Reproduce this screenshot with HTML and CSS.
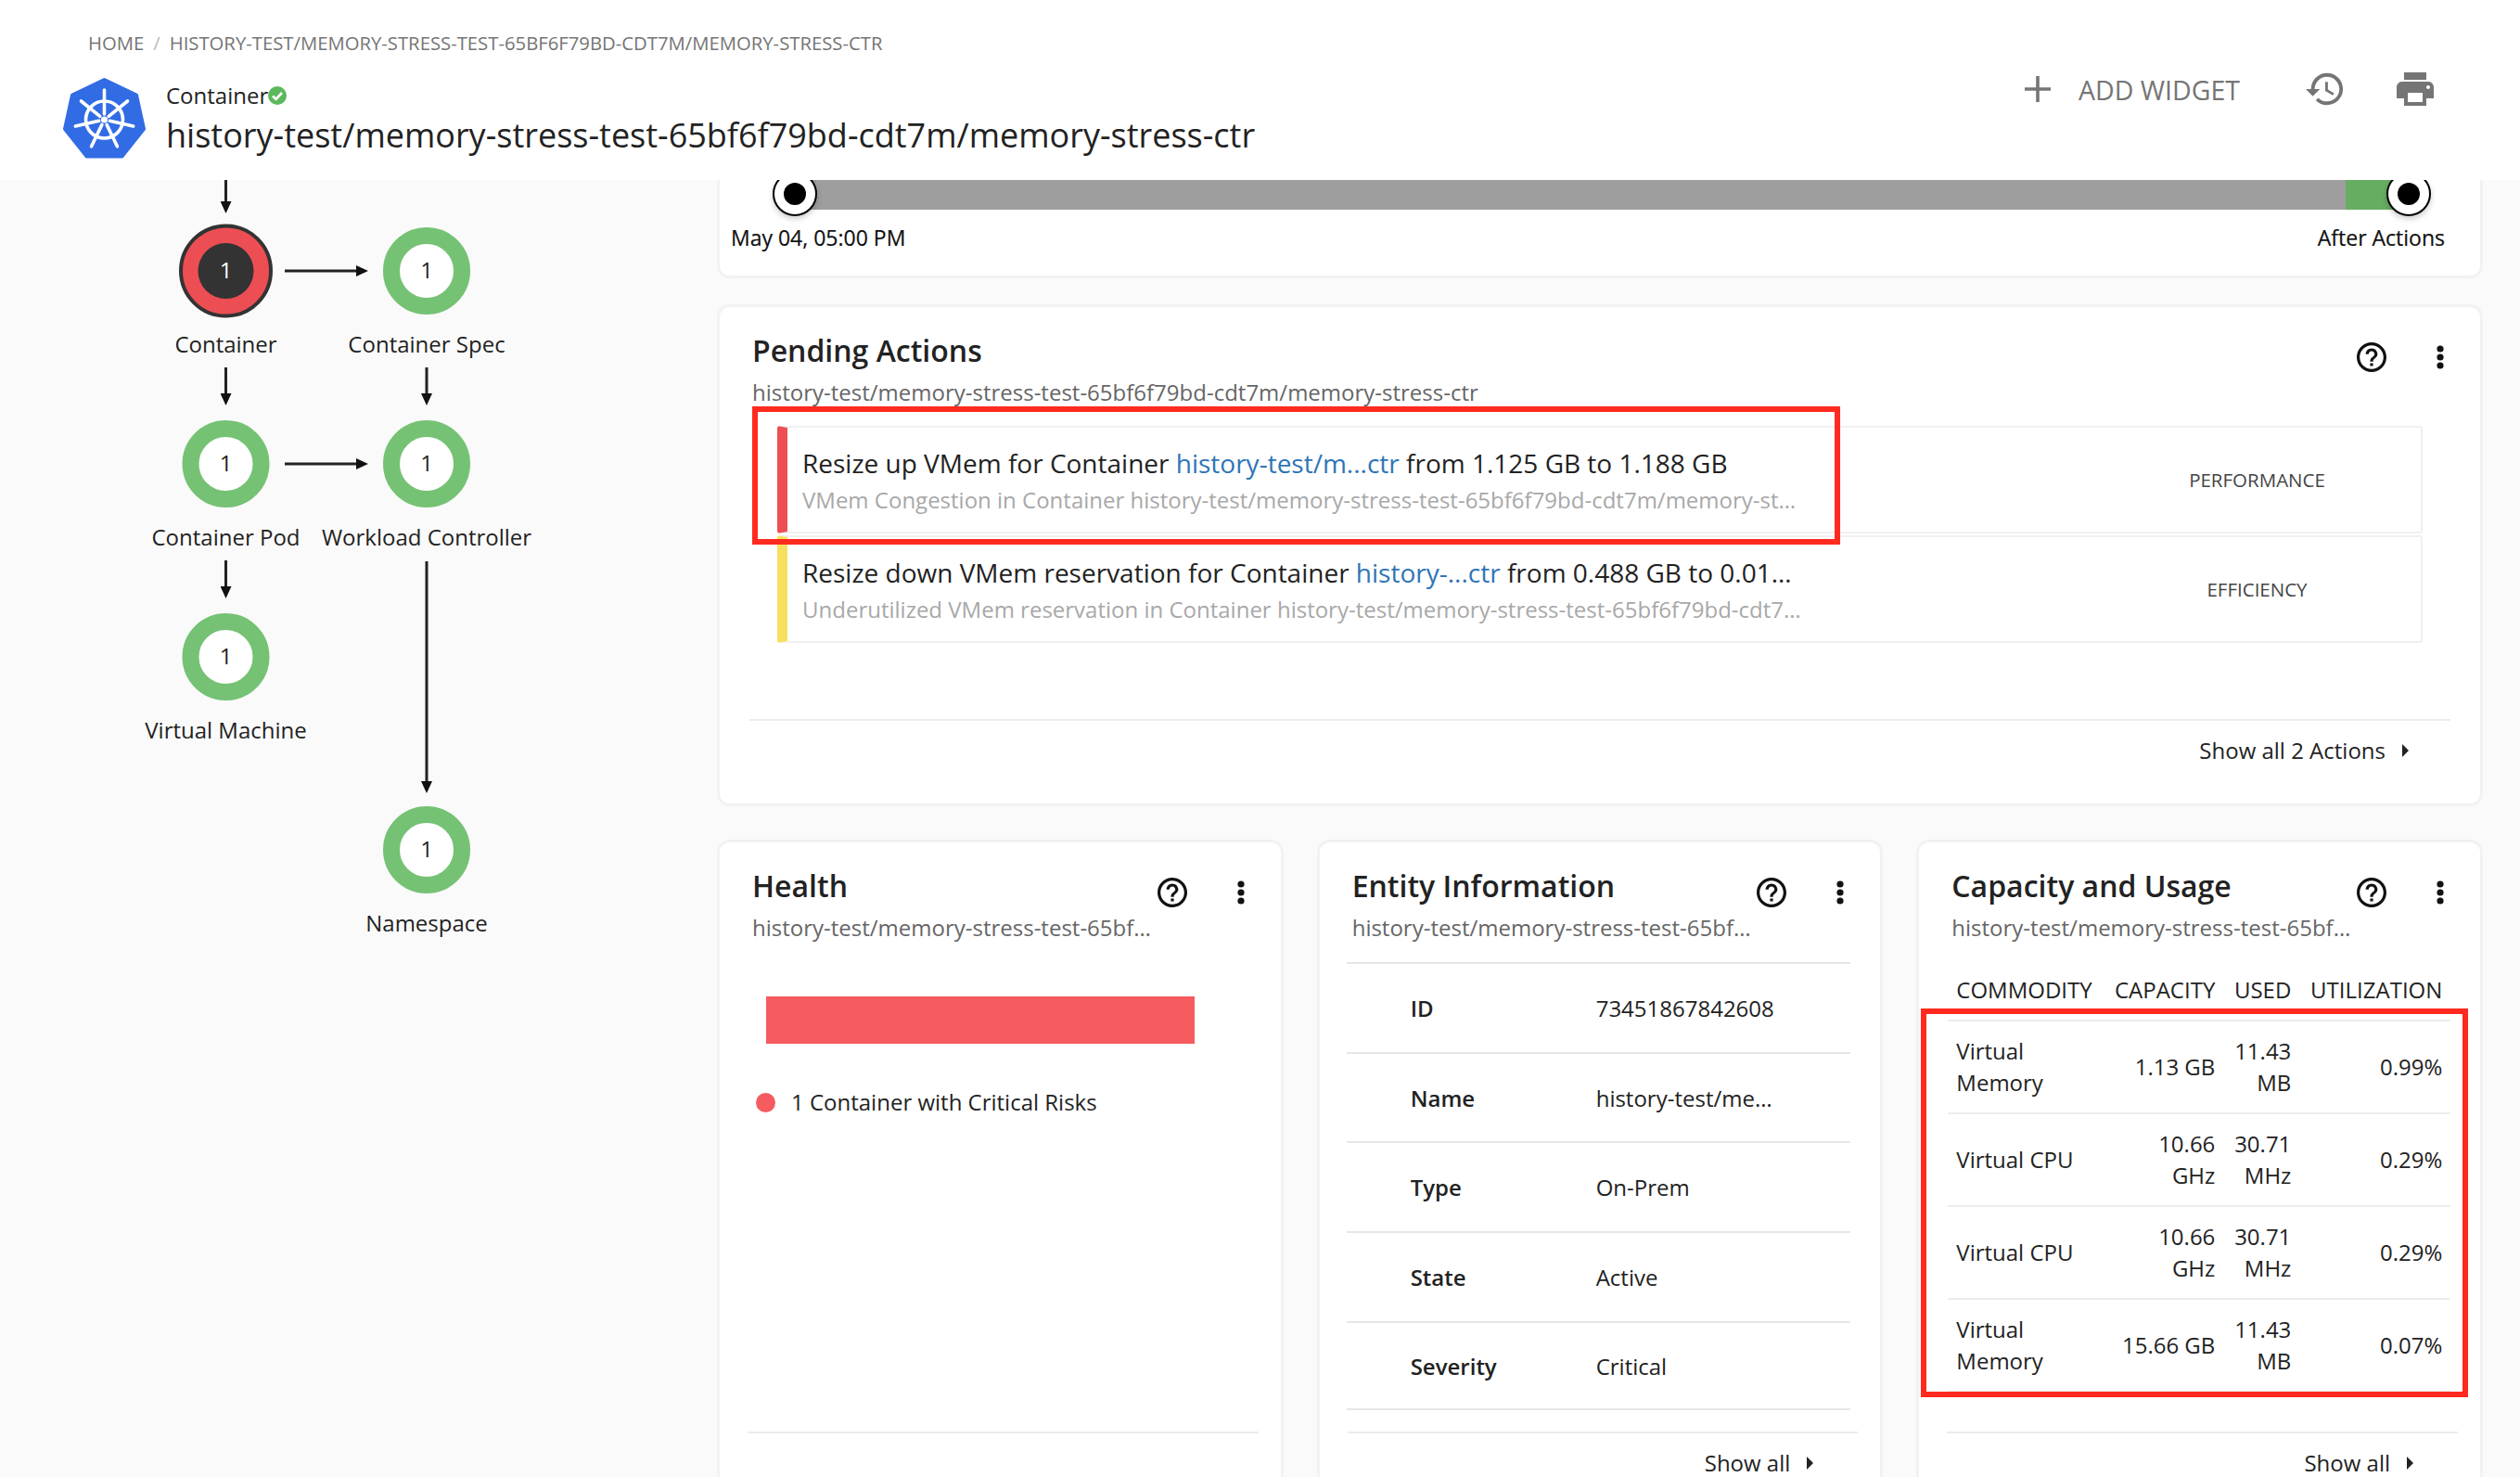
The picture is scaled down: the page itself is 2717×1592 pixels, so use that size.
FILE: index.html
```html
<!DOCTYPE html>
<html lang="en">

<head>
    <meta charset="UTF-8">
    <meta name="viewport" content="width=device-width, initial-scale=1.0">
    <title>Container - history-test/memory-stress-ctr</title>
    <link rel="stylesheet" href="styles.css">
</head>

<body>
    <svg class="icon-defs" width="0" height="0">
        <symbol id="icon-help" viewBox="2 2 20 20">
            <path d="M11 18h2v-2h-2v2zm1-16C6.48 2 2 6.48 2 12s4.48 10 10 10 10-4.48 10-10S17.52 2 12 2zm0 18c-4.41 0-8-3.59-8-8s3.59-8 8-8 8 3.59 8 8-3.59 8-8 8zm0-14c-2.21 0-4 1.79-4 4h2c0-1.1.9-2 2-2s2 .9 2 2c0 2-3 1.75-3 5h2c0-2.25 3-2.5 3-5 0-2.21-1.79-4-4-4z" />
        </symbol>
        <symbol id="icon-more" viewBox="0 0 8 26">
            <circle cx="4" cy="4" r="3.6" />
            <circle cx="4" cy="13" r="3.6" />
            <circle cx="4" cy="22" r="3.6" />
        </symbol>
    </svg>

    <header class="topbar">
        <div class="topbar-left">
            <nav class="breadcrumb">
                <span>Home</span>
                <span class="breadcrumb-sep">/</span>
                <span>history-test/memory-stress-test-65bf6f79bd-cdt7m/memory-stress-ctr</span>
            </nav>
            <div class="entity-title">
                <svg class="k8s-logo" viewBox="0 0 89 89">
                    <polygon points="44.5,3 79,19.5 87,56 63.5,85.5 25.5,85.5 2,56 10,19.5" fill="#326ce5" stroke="#326ce5" stroke-width="4" stroke-linejoin="round" />
                    <g fill="none" stroke="#fff" stroke-width="3.6">
                        <circle cx="44.5" cy="46" r="20" />
                        <path d="M44.500 14V40M69.500 26L49.200 42.300M75.700 53.100L50.400 47.300M58.400 74.800L47.100 51.400M30.600 74.800L41.900 51.400M13.300 53.100L38.600 47.300M19.500 26L39.800 42.300" stroke-linecap="round" />
                    </g>
                    <circle cx="44.5" cy="46" r="3.6" fill="#fff" />
                </svg>
                <div>
                    <div class="entity-type">Container<svg class="check-icon" viewBox="0 0 20 20">
                            <circle cx="10" cy="10" r="10" fill="#5cb85c" />
                            <path d="M5 10.500l3.500 3.500 6.500-7" fill="none" stroke="#fff" stroke-width="2.600" />
                        </svg></div>
                    <div class="entity-name">history-test/memory-stress-test-65bf6f79bd-cdt7m/memory-stress-ctr</div>
                </div>
            </div>
        </div>
        <div class="topbar-actions">
            <svg class="plus-icon" viewBox="0 0 28 28">
                <path d="M14 0V28M0 14H28" stroke="#757575" stroke-width="3.600" />
            </svg>
            <span class="add-widget">Add Widget</span>
            <svg class="history-icon" viewBox="1 3 22 18">
                <path d="M13 3c-4.970 0-9 4.030-9 9H1l3.890 3.890.07.14L9 12H6c0-3.870 3.130-7 7-7s7 3.130 7 7-3.130 7-7 7c-1.930 0-3.680-.79-4.940-2.060l-1.420 1.420C8.270 19.990 10.510 21 13 21c4.970 0 9-4.030 9-9s-4.030-9-9-9zm-1 5v5l4.280 2.540.72-1.210-3.500-2.080V8H12z" />
            </svg>
            <svg class="print-icon" viewBox="2 3 20 18">
                <path d="M19 8H5c-1.660 0-3 1.340-3 3v6h4v4h12v-4h4v-6c0-1.660-1.340-3-3-3zm-3 11H8v-5h8v5zm3-7c-.55 0-1-.45-1-1s.45-1 1-1 1 .45 1 1-.45 1-1 1zm-1-9H6v4h12V3z" />
            </svg>
        </div>
    </header>

    <main class="page">
        <!-- supply chain, node positions are the content here -->
        <svg class="chain" viewBox="0 0 773 1398">
            <defs>
                <marker id="arrow-head" markerWidth="14" markerHeight="12" refX="0" refY="6" orient="auto" markerUnits="userSpaceOnUse">
                    <path d="M0 0L13 6L0 12z" fill="#111" />
                </marker>
            </defs>
            <g class="chain-edges" transform="translate(0,-194)">
                <path d="M243.500 194V217" marker-end="url(#arrow-head)" />
                <path d="M243.500 396V424" marker-end="url(#arrow-head)" />
                <path d="M460 396V424" marker-end="url(#arrow-head)" />
                <path d="M243.500 604V632" marker-end="url(#arrow-head)" />
                <path d="M460 605V842" marker-end="url(#arrow-head)" />
                <path d="M307 292H384" marker-end="url(#arrow-head)" />
                <path d="M307 500H384" marker-end="url(#arrow-head)" />
            </g>
            <g transform="translate(0,-194)">
                <circle cx="243.500" cy="292" r="48.500" fill="#ed4e53" stroke="#333" stroke-width="4" />
                <circle cx="243.500" cy="292" r="30" fill="#333" />
                <text class="node-count node-count-dark" x="243.500" y="290">1</text>
                <text class="node-label" x="243.500" y="370">Container</text>

                <circle class="node-ok" cx="460" cy="292" r="38" />
                <text class="node-count" x="460" y="290">1</text>
                <text class="node-label" x="460" y="370">Container Spec</text>

                <circle class="node-ok" cx="243.500" cy="500" r="38" />
                <text class="node-count" x="243.500" y="498">1</text>
                <text class="node-label" x="243.500" y="578">Container Pod</text>

                <circle class="node-ok" cx="460" cy="500" r="38" />
                <text class="node-count" x="460" y="498">1</text>
                <text class="node-label" x="460" y="578">Workload Controller</text>

                <circle class="node-ok" cx="243.500" cy="708" r="38" />
                <text class="node-count" x="243.500" y="706">1</text>
                <text class="node-label" x="243.500" y="786">Virtual Machine</text>

                <circle class="node-ok" cx="460" cy="916" r="38" />
                <text class="node-count" x="460" y="914">1</text>
                <text class="node-label" x="460" y="994">Namespace</text>
            </g>
        </svg>

        <div class="content">
            <section class="card slider-card">
                <div class="slider-track">
                    <div class="slider-fill"></div>
                    <span class="slider-knob slider-knob-left"></span>
                    <span class="slider-knob slider-knob-right"></span>
                </div>
                <div class="slider-labels">
                    <span>May 04, 05:00 PM</span>
                    <span>After Actions</span>
                </div>
            </section>

            <section class="card">
                <div class="card-head">
                    <div>
                        <h2>Pending Actions</h2>
                        <div class="card-sub">history-test/memory-stress-test-65bf6f79bd-cdt7m/memory-stress-ctr</div>
                    </div>
                    <div class="card-tools">
                        <svg class="help-icon"><use href="#icon-help" /></svg>
                        <svg class="more-icon"><use href="#icon-more" /></svg>
                    </div>
                </div>
                <div class="action-list">
                    <div class="action-row action-critical">
                        <div class="action-text">
                            <div class="action-title">Resize up VMem for Container <a>history-test/m...ctr</a> from 1.125 GB to 1.188 GB</div>
                            <div class="action-reason">VMem Congestion in Container history-test/memory-stress-test-65bf6f79bd-cdt7m/memory-stress-ctr</div>
                        </div>
                        <div class="action-tag">PERFORMANCE</div>
                    </div>
                    <div class="action-row action-minor">
                        <div class="action-text">
                            <div class="action-title">Resize down VMem reservation for Container <a>history-...ctr</a> from 0.488 GB to 0.01 GB</div>
                            <div class="action-reason">Underutilized VMem reservation in Container history-test/memory-stress-test-65bf6f79bd-cdt7m/memory-stress-ctr</div>
                        </div>
                        <div class="action-tag">EFFICIENCY</div>
                    </div>
                </div>
                <div class="card-foot foot-actions">Show all 2 Actions<span class="foot-arrow"></span></div>
                <div class="highlight highlight-action"></div>
            </section>

            <div class="card-row">
                <section class="card">
                    <div class="card-head">
                        <div>
                            <h2>Health</h2>
                            <div class="card-sub card-sub-short">history-test/memory-stress-test-65bf6f79bd-cdt7m/memory-stress-ctr</div>
                        </div>
                        <div class="card-tools">
                            <svg class="help-icon"><use href="#icon-help" /></svg>
                            <svg class="more-icon"><use href="#icon-more" /></svg>
                        </div>
                    </div>
                    <div class="card-body health-body">
                        <div class="health-bar"></div>
                        <div class="health-legend"><span class="legend-dot"></span>1 Container with Critical Risks</div>
                    </div>
                    <div class="card-foot card-foot-small"></div>
                </section>

                <section class="card">
                    <div class="card-head">
                        <div>
                            <h2>Entity Information</h2>
                            <div class="card-sub card-sub-short">history-test/memory-stress-test-65bf6f79bd-cdt7m/memory-stress-ctr</div>
                        </div>
                        <div class="card-tools">
                            <svg class="help-icon"><use href="#icon-help" /></svg>
                            <svg class="more-icon"><use href="#icon-more" /></svg>
                        </div>
                    </div>
                    <div class="card-body entity-body">
                        <div class="entity-row"><span class="entity-key">ID</span><span class="entity-value">73451867842608</span></div>
                        <div class="entity-row"><span class="entity-key">Name</span><span class="entity-value">history-test/memory-stress-ctr</span></div>
                        <div class="entity-row"><span class="entity-key">Type</span><span class="entity-value">On-Prem</span></div>
                        <div class="entity-row"><span class="entity-key">State</span><span class="entity-value">Active</span></div>
                        <div class="entity-row"><span class="entity-key">Severity</span><span class="entity-value">Critical</span></div>
                    </div>
                    <div class="card-foot card-foot-small">Show all<span class="foot-arrow"></span></div>
                </section>

                <section class="card">
                    <div class="card-head">
                        <div>
                            <h2>Capacity and Usage</h2>
                            <div class="card-sub card-sub-short">history-test/memory-stress-test-65bf6f79bd-cdt7m/memory-stress-ctr</div>
                        </div>
                        <div class="card-tools">
                            <svg class="help-icon"><use href="#icon-help" /></svg>
                            <svg class="more-icon"><use href="#icon-more" /></svg>
                        </div>
                    </div>
                    <div class="card-body capacity-body">
                        <table class="capacity-table">
                            <colgroup>
                                <col class="col-commodity">
                                <col class="col-capacity">
                                <col class="col-used">
                                <col>
                            </colgroup>
                            <thead>
                                <tr>
                                    <th class="text-left">COMMODITY</th>
                                    <th>CAPACITY</th>
                                    <th>USED</th>
                                    <th>UTILIZATION</th>
                                </tr>
                            </thead>
                            <tbody>
                                <tr>
                                    <td class="text-left">Virtual Memory</td>
                                    <td>1.13 GB</td>
                                    <td>11.43 MB</td>
                                    <td>0.99%</td>
                                </tr>
                                <tr>
                                    <td class="text-left">Virtual CPU</td>
                                    <td>10.66 GHz</td>
                                    <td>30.71 MHz</td>
                                    <td>0.29%</td>
                                </tr>
                                <tr>
                                    <td class="text-left">Virtual CPU</td>
                                    <td>10.66 GHz</td>
                                    <td>30.71 MHz</td>
                                    <td>0.29%</td>
                                </tr>
                                <tr>
                                    <td class="text-left">Virtual Memory</td>
                                    <td>15.66 GB</td>
                                    <td>11.43 MB</td>
                                    <td>0.07%</td>
                                </tr>
                            </tbody>
                        </table>
                    </div>
                    <div class="card-foot card-foot-small">Show all<span class="foot-arrow"></span></div>
                    <div class="highlight highlight-capacity"></div>
                </section>
            </div>
        </div>
    </main>
</body>

</html>
```

FILE: styles.css
```css
* {
    box-sizing: border-box;
}

html,
body {
    margin: 0;
    height: 100%;
    overflow: hidden;
}

body {
    font-family: "Open Sans", "Noto Sans", sans-serif;
    background-color: #fafafa;
    color: #222;
    font-size: 24px;
}

.icon-defs {
    position: absolute;
}

/* top bar */
.topbar {
    height: 194px;
    background-color: #fff;
    display: flex;
    justify-content: space-between;
    padding: 0 93px 0 68px;
}

.breadcrumb {
    margin: 34px 0 0 27px;
    height: 24px;
    line-height: 24px;
    font-size: 20.300px;
    color: #757575;
    text-transform: uppercase;
    display: flex;
    gap: 10px;
}

.breadcrumb-sep {
    color: #bbb;
}

.entity-title {
    display: flex;
    gap: 22px;
    margin-top: 25px;
}

.k8s-logo {
    width: 89px;
    height: 89px;
}

.entity-type {
    font-size: 24px;
    line-height: 32px;
    margin-top: 4px;
    display: flex;
    align-items: center;
}

.check-icon {
    width: 20px;
    height: 20px;
}

.entity-name {
    font-size: 36px;
    line-height: 50px;
    margin-top: 2px;
    white-space: nowrap;
}

.topbar-actions {
    display: flex;
    align-items: flex-start;
    padding-top: 78px;
    color: #757575;
}

.plus-icon {
    width: 28px;
    height: 28px;
    margin-top: 4px;
}

.add-widget {
    margin: 0 71px 0 30px;
    font-size: 28.500px;
    line-height: 38px;
    text-transform: uppercase;
}

.history-icon {
    width: 42px;
    height: 36px;
    fill: #757575;
}

.print-icon {
    width: 40px;
    height: 36px;
    margin-left: 56px;
    fill: #757575;
}

/* page */
.page {
    height: 1398px;
    overflow: hidden;
    display: flex;
}

.chain {
    width: 773px;
    height: 1398px;
    flex: none;
}

.chain-edges path {
    fill: none;
    stroke: #222;
    stroke-width: 3;
}

.node-ok {
    fill: #fff;
    stroke: #75c274;
    stroke-width: 18;
}

.node-count {
    font-size: 24px;
    text-anchor: middle;
    dominant-baseline: central;
    fill: #222;
}

.node-count-dark {
    fill: #fff;
}

.node-label {
    font-size: 24px;
    text-anchor: middle;
    dominant-baseline: central;
    fill: #222;
}

.content {
    width: 1904px;
    flex: none;
    display: flex;
    flex-direction: column;
    gap: 30px;
}

.content > * {
    flex: none;
}

.card {
    position: relative;
    background-color: #fff;
    border: 3px solid #f2f2f2;
    border-radius: 14px;
}

.card-row {
    display: grid;
    grid-template-columns: repeat(3, minmax(0, 1fr));
    gap: 36px;
    margin-top: 6px;
}

.card-row .card {
    height: 760px;
}

.card-head {
    padding: 27px 39px 0 35px;
    display: flex;
    justify-content: space-between;
}

h2 {
    margin: 0;
    font-size: 32px;
    line-height: 40px;
    font-weight: 600;
    color: #222;
}

.card-sub {
    margin-top: 10px;
    font-size: 24px;
    line-height: 30px;
    color: #666;
    white-space: nowrap;
}

.card-sub-short {
    width: 432px;
    overflow: hidden;
    text-overflow: ellipsis;
}

.card-tools {
    display: flex;
    flex: none;
    gap: 54px;
    align-items: center;
    height: 30px;
    margin-top: 12px;
}

.help-icon {
    width: 32px;
    height: 32px;
    fill: #111;
}

.more-icon {
    width: 8px;
    height: 26px;
    fill: #111;
}

.card-foot {
    border-top: 2px solid #ececec;
    margin: 0 32px;
    padding-top: 15px;
    line-height: 34px;
    font-size: 24px;
    display: flex;
    justify-content: flex-end;
    align-items: center;
}

.foot-actions {
    margin-top: 82px;
    padding-bottom: 40px;
    padding-right: 45px;
}

.card-foot-small {
    margin-right: 24px;
    margin-left: 30px;
    padding-right: 48px;
    min-height: 51px;
}

.foot-arrow {
    width: 0;
    height: 0;
    margin-left: 18px;
    border-left: 7px solid #222;
    border-top: 7px solid transparent;
    border-bottom: 7px solid transparent;
}

/* slider */
.slider-card {
    height: 106px;
    margin-bottom: -2px;
    border-top: none;
    border-top-left-radius: 0;
    border-top-right-radius: 0;
    padding: 0 12px;
}

.slider-track {
    position: relative;
    height: 32px;
    margin: 0 72px 0 71px;
    background-color: #9e9e9e;
}

.slider-fill {
    position: absolute;
    top: 0;
    right: 0;
    width: 61px;
    height: 100%;
    background-color: #66ad62;
}

.slider-knob {
    position: absolute;
    top: -9px;
    width: 48px;
    height: 48px;
    border-radius: 50%;
    background-color: #fff;
    border: 2px solid #000;
    box-shadow: 0 3px 6px rgba(0, 0, 0, 0.2);
}

.slider-knob::after {
    content: "";
    position: absolute;
    top: 10px;
    left: 10px;
    width: 24px;
    height: 24px;
    border-radius: 50%;
    background-color: #000;
}

.slider-knob-left {
    left: -26px;
}

.slider-knob-right {
    right: -31px;
}

.slider-labels {
    display: flex;
    justify-content: space-between;
    margin-top: 15px;
    font-size: 23px;
    line-height: 30px;
    padding-right: 26px;
    color: #111;
    -webkit-text-stroke: 0.2px #111;
}

/* pending actions */
.action-list {
    margin: 21px 62px 0 62px;
    display: flex;
    flex-direction: column;
    gap: 2px;
}

.action-row {
    height: 116px;
    border: 2px solid #f0f0f0;
    border-left: 11px solid;
    border-radius: 3px;
    display: flex;
    align-items: center;
    padding-left: 16px;
}

.action-critical {
    border-left-color: #ed4e53;
}

.action-minor {
    border-left-color: #f6e05e;
}

.action-text {
    width: 1078px;
}

.action-title {
    width: 1070px;
    font-size: 28px;
    line-height: 38px;
    white-space: nowrap;
    overflow: hidden;
    text-overflow: ellipsis;
}

.action-title a {
    color: #2e75b6;
}

.action-reason {
    margin-top: 5px;
    font-size: 24px;
    line-height: 32px;
    color: #a8a8a8;
    white-space: nowrap;
    overflow: hidden;
    text-overflow: ellipsis;
}

.action-tag {
    width: 400px;
    margin-left: 314px;
    text-align: center;
    font-size: 20.500px;
    color: #444;
}

/* health */
.health-body {
    height: 528px;
    padding: 59px 0 0 50px;
}

.health-bar {
    width: 462px;
    height: 51px;
    background-color: #f55b5f;
}

.health-legend {
    margin: 46px 0 0 -11px;
    line-height: 34px;
    display: flex;
    align-items: center;
    gap: 17px;
}

.legend-dot {
    width: 21px;
    height: 21px;
    border-radius: 50%;
    background-color: #f55b5f;
}

/* entity info */
.entity-body {
    height: 528px;
    padding: 22px 32px 0 29px;
}

.entity-row {
    height: 96.700px;
    border-top: 2px solid #e6e6e6;
    display: flex;
    align-items: center;
    padding-left: 69px;
}

.entity-row:last-child {
    border-bottom: 2px solid #e6e6e6;
}

.entity-key {
    width: 200px;
    font-weight: 600;
}

.entity-value {
    width: 200px;
    white-space: nowrap;
    overflow: hidden;
    text-overflow: ellipsis;
}

/* capacity */
.capacity-body {
    height: 528px;
    padding: 35px 31px 0 31px;
}

.capacity-table {
    width: 542px;
    table-layout: fixed;
    border-collapse: collapse;
}

.col-commodity {
    width: 169px;
}

.col-capacity {
    width: 128px;
}

.col-used {
    width: 82px;
}

.capacity-table th {
    font-weight: 400;
    line-height: 34px;
    padding: 0 9px 15px;
    text-align: right;
    white-space: nowrap;
}

.capacity-table td {
    height: 100px;
    padding: 0 9px;
    line-height: 34px;
    text-align: right;
    border-top: 2px solid #ececec;
    border-bottom: 2px solid #ececec;
}

.capacity-table .text-left {
    text-align: left;
}

/* red marks on top of the cards */
.highlight {
    position: absolute;
    border: 6px solid #ff2a1f;
    pointer-events: none;
}

.highlight-action {
    left: 35px;
    top: 107px;
    width: 1173px;
    height: 149px;
}

.highlight-capacity {
    left: 2px;
    top: 179px;
    width: 590px;
    height: 419px;
}
```
